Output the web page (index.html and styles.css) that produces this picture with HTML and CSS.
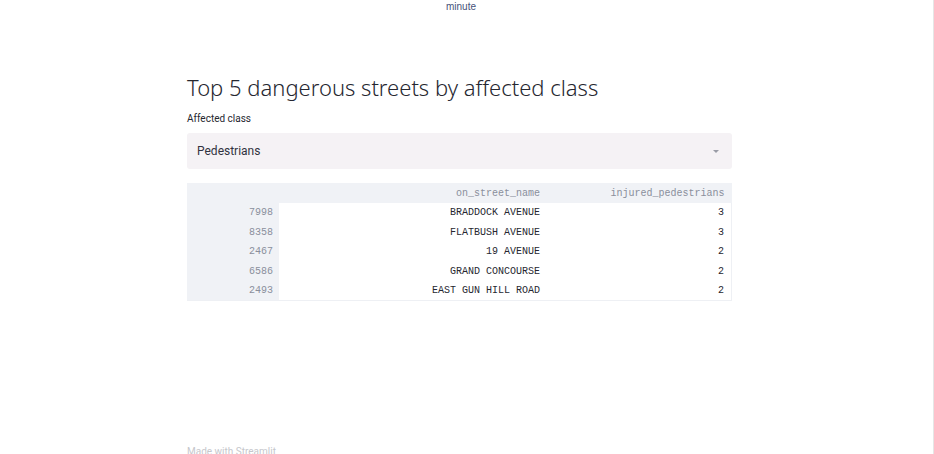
FILE: index.html
```html
<!DOCTYPE html>
<html>
<head>
<meta charset="utf-8">
<link rel="stylesheet" href="styles.css">
</head>
<body>
<div class="page">
  <main class="block">
    <div class="axis-title">minute</div>
    <h2 class="title">Top 5 dangerous streets by affected class</h2>
    <label class="label">Affected class</label>
    <div class="select">
      <span class="select-value">Pedestrians</span>
      <span class="caret"></span>
    </div>
    <table class="df">
      <thead>
        <tr><th class="idx"></th><th class="c1">on_street_name</th><th class="c2">injured_pedestrians</th></tr>
      </thead>
      <tbody>
        <tr><th class="idx">7998</th><td>BRADDOCK AVENUE</td><td class="last">3</td></tr>
        <tr><th class="idx">8358</th><td>FLATBUSH AVENUE</td><td class="last">3</td></tr>
        <tr><th class="idx">2467</th><td>19 AVENUE</td><td class="last">2</td></tr>
        <tr><th class="idx">6586</th><td>GRAND CONCOURSE</td><td class="last">2</td></tr>
        <tr><th class="idx">2493</th><td>EAST GUN HILL ROAD</td><td class="last">2</td></tr>
      </tbody>
    </table>
    <footer class="footer">Made with Streamlit</footer>
  </main>
</div>
</body>
</html>
```

FILE: styles.css
```css
html, body {
  margin: 0;
  padding: 0;
  background: #ffffff;
}
body {
  width: 934px;
  height: 454px;
  overflow: hidden;
}
.page {
  box-sizing: border-box;
  width: 934px;
  height: 454px;
  border-right: 1px solid #e6e6e6;
}
.block {
  width: 545px;
  margin-left: 187px;
  display: flex;
  flex-direction: column;
}
.axis-title {
  font-family: "Liberation Sans", Arial, sans-serif;
  font-size: 10px;
  line-height: 12px;
  color: #46527a;
  text-align: center;
  margin-left: 3px;
  padding-top: 1px;
}
.title {
  font-family: "Noto Sans", sans-serif;
  font-weight: 300;
  font-size: 22px;
  line-height: 30px;
  color: #262730;
  margin: 59px 0 0 0;
}
.label {
  font-family: "Roboto", sans-serif;
  font-size: 10px;
  line-height: 13px;
  color: #262730;
  margin-top: 10px;
}
.select {
  margin-top: 8px;
  height: 36px;
  background: #f5f2f5;
  border-radius: 3px;
  display: flex;
  align-items: center;
  justify-content: space-between;
  padding: 0 13px 0 10px;
}
.select-value {
  font-family: "Roboto", sans-serif;
  font-size: 12px;
  color: #31333f;
}
.caret {
  width: 0;
  height: 0;
  border-left: 3px solid transparent;
  border-right: 3px solid transparent;
  border-top: 3px solid #9a9ca6;
  margin-top: 1px;
}
.df {
  margin-top: 14px;
  border-collapse: collapse;
  width: 545px;
  font-family: "Liberation Mono", "DejaVu Sans Mono", monospace;
  font-size: 10px;
  table-layout: fixed;
}
.df th, .df td {
  height: 19.6px;
  padding: 0 7px 0 0;
  text-align: right;
  font-weight: normal;
  white-space: nowrap;
  box-sizing: border-box;
}
.df thead th {
  background: #f0f2f6;
  color: #8a8f9c;
  height: 20px;
}
.df th.idx {
  width: 92px;
  background: #f0f2f6;
  color: #8a8f9c;
  padding-right: 6px;
}
.df th.c1 {
  width: 268px;
}
.df td {
  color: #262730;
  background: #ffffff;
}
.df td.last {
  border-right: 1px solid #eef0f4;
}
.df tbody tr:last-child th, .df tbody tr:last-child td {
  border-bottom: 1px solid #eef0f4;
}
.footer {
  margin-top: 145px;
  font-family: "Roboto", sans-serif;
  font-size: 10px;
  color: #c6c7cc;
}
```
